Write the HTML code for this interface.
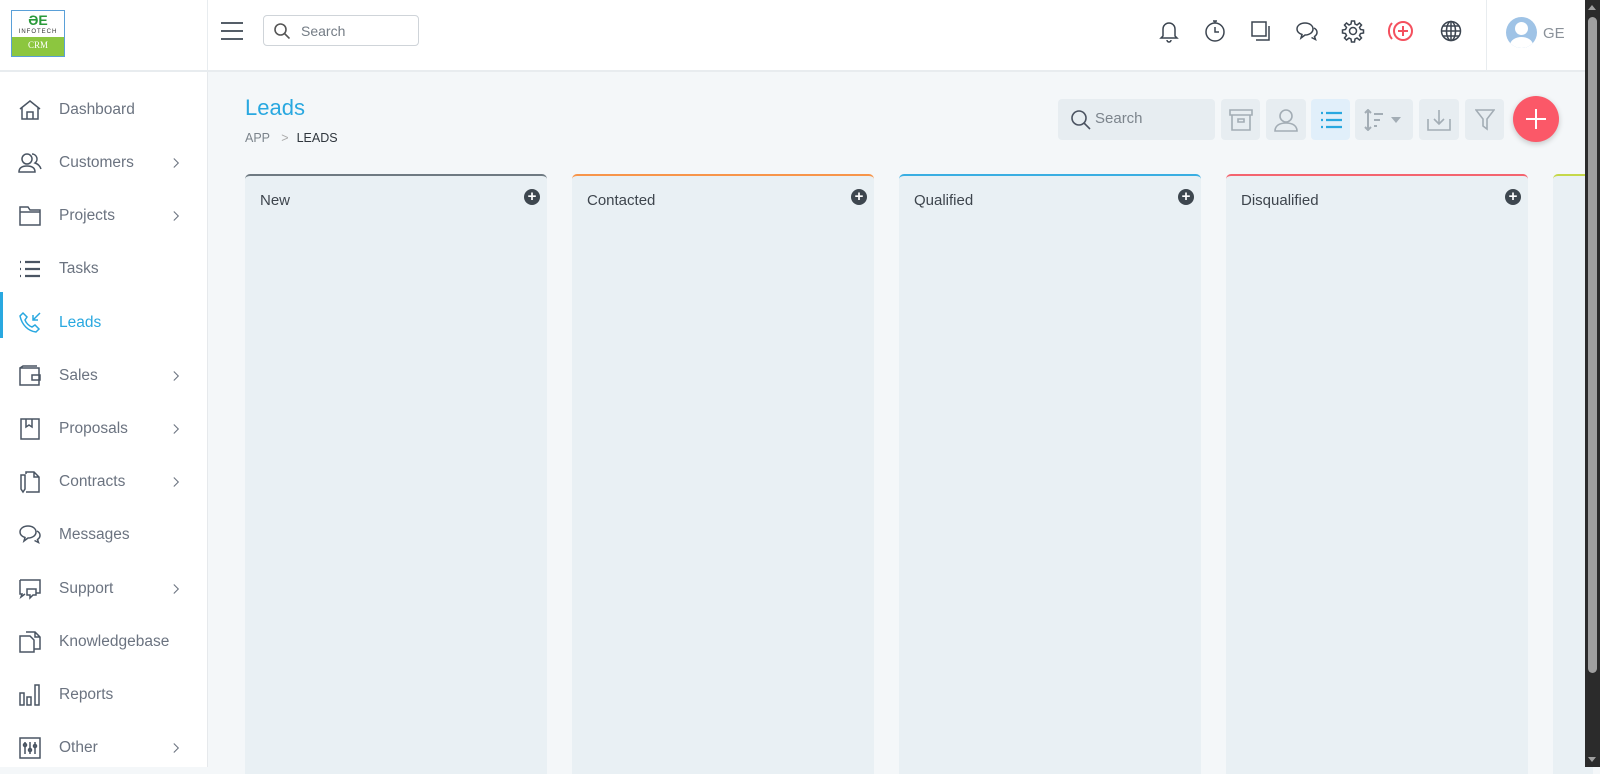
<!DOCTYPE html>
<html><head><meta charset="utf-8"><style>
*{box-sizing:border-box;margin:0;padding:0}
body{width:1600px;height:767px;overflow:hidden;background:#f4f7f9;font-family:"Liberation Sans",sans-serif;position:relative}
.hdr{position:absolute;left:0;top:0;width:1585px;height:72px;background:#fff;border-bottom:2px solid #e8ecef}
.side{position:absolute;left:0;top:72px;width:208px;height:695px;background:#fff;border-right:1px solid #e6e9ec}
.vdiv{position:absolute;left:207px;top:0;width:1px;height:72px;background:#e8ecef}
.item{position:absolute;left:0;width:207px;height:44px;display:flex;align-items:center}
.item svg{position:absolute;left:18px;width:24px;height:24px;fill:none;stroke:#4a5563;stroke-width:1.5}
.item span{position:absolute;left:59px;font-size:15.5px;color:#6b7380}
.item .chev{position:absolute;left:172px;width:9px;height:12px;stroke-width:1.2}
.col{position:absolute;top:174px;width:302px;height:600px;background:#e9f0f4;border-radius:5px 5px 0 0;border-top:2px solid}
.col b{position:absolute;left:15px;top:16px;font-weight:normal;font-size:15px;color:#3e454d}
.col i{position:absolute;right:7px;top:13px;width:16px;height:16px;border-radius:50%;background:#3e474f;color:#fff;font-style:normal;font-size:15px;line-height:15px;text-align:center;font-weight:bold}
.tb{position:absolute;top:99px;height:41px;background:#e7edf1;border-radius:4px}
.tb svg{position:absolute;left:50%;top:50%;transform:translate(-50%,-50%);fill:none;stroke:#a3adb5;stroke-width:1.6}
.hi svg{position:absolute;top:19px;width:24px;height:24px;fill:none;stroke:#3c4550;stroke-width:1.5}
</style></head><body>
<div class="hdr hi">
  <div style="position:absolute;left:11px;top:10px;width:54px;height:47px;border:1px solid #5aa0d8;background:#fff">
    <div style="text-align:center;font-size:14px;font-weight:bold;color:#2a9a3a;line-height:16px;margin-top:1px">ƏE</div>
    <div style="text-align:center;font-size:6px;letter-spacing:1px;color:#333;line-height:8px">INFOTECH</div>
    <div style="position:absolute;left:0;right:0;bottom:0;height:19px;background:#8cc63f;color:#fff;font-size:9px;text-align:center;line-height:16px;font-family:'Liberation Serif',serif">CRM</div>
  </div>
  <div class="vdiv"></div>
  <svg style="left:221px;top:21px;width:22px;height:20px;stroke:#555e68;stroke-width:2" viewBox="0 0 22 20"><path d="M0 2h22M0 10h22M0 18h22"/></svg>
  <div style="position:absolute;left:263px;top:15px;width:156px;height:31px;border:1px solid #cfd4d9;border-radius:4px"><svg style="position:absolute;left:10px;top:7px;width:16px;height:16px;fill:none;stroke:#555;stroke-width:1.6" viewBox="0 0 16 16"><circle cx="6.5" cy="6.5" r="5.5"/><path d="M10.5 10.5l5 5"/></svg><span style="position:absolute;left:37px;top:7px;font-size:14px;color:#747c85">Search</span></div>
  <svg style="left:1157px" viewBox="0 0 24 24"><path d="M6 17V10a6 6 0 0112 0v7l2 2H4zM10 21a2 2 0 004 0"/></svg>
  <svg style="left:1203px" viewBox="0 0 24 24"><circle cx="12" cy="13" r="9"/><path d="M10 2h4M12 2v2M12 8v5h4"/></svg>
  <svg style="left:1249px" viewBox="0 0 24 24"><path d="M3 3h14v14H3zM20 7v14H7"/></svg>
  <svg style="left:1295px" viewBox="0 0 24 24"><path d="M10 4c4.5 0 8 2.5 8 6s-3.5 6-8 6l-4 3 1-3.5C4 14.5 2 12.5 2 10c0-3.5 3.5-6 8-6zM19 9c2 1 3 2.5 3 4.5 0 1.5-1 3-2.5 4l1 3-4-2"/></svg>
  <svg style="left:1341px" viewBox="0 0 24 24"><circle cx="12" cy="12" r="3.5"/><path d="M10.5 2h3l.5 3 2 1 2.5-2 2 2-2 2.5 1 2 3 .5v3l-3 .5-1 2 2 2.5-2 2-2.5-2-2 1-.5 3h-3l-.5-3-2-1-2.5 2-2-2 2-2.5-1-2-3-.5v-3l3-.5 1-2-2-2.5 2-2 2.5 2 2-1z"/></svg>
  <svg style="left:1386px;width:30px;stroke:#f4505e;stroke-width:2" viewBox="0 0 30 24"><circle cx="17" cy="12" r="9"/><path d="M17 7v10M12 12h10M6 4a12 12 0 000 16"/></svg>
  <svg style="left:1439px" viewBox="0 0 24 24"><circle cx="12" cy="12" r="9.5"/><ellipse cx="12" cy="12" rx="4.5" ry="9.5"/><path d="M2.5 12h19M4 7h16M4 17h16M12 2.5v19"/></svg>
  <div style="position:absolute;left:1486px;top:0;width:1px;height:72px;background:#e8ecef"></div>
  <div style="position:absolute;left:1506px;top:17px;width:31px;height:31px;border-radius:50%;background:#9fc3e6;overflow:hidden"><div style="position:absolute;left:9px;top:5px;width:13px;height:13px;border-radius:50%;background:#fff"></div><div style="position:absolute;left:4px;top:20px;width:23px;height:16px;border-radius:50% 50% 0 0;background:#fff"></div></div>
  <span style="position:absolute;left:1543px;top:25px;font-size:15px;color:#8a9199">GE</span>
</div>
<div class="side">
  <div class="item" style="top:16px"><svg viewBox="0 0 24 24"><path d="M2 11L12 3l10 8M4 9v12h16V9M9 21v-7h6v7"/></svg><span>Dashboard</span></div>
  <div class="item" style="top:69px"><svg viewBox="0 0 24 24"><circle cx="9" cy="8" r="5"/><path d="M1 21c0-4 3-6 8-6s8 2 8 6zM14 3a5 5 0 013 9c3 1 5 3 6 6"/></svg><span>Customers</span><svg class="chev" viewBox="0 0 10 12"><path d="M2 1l5 5-5 5" stroke="#6b7380" fill="none"/></svg></div>
  <div class="item" style="top:122px"><svg viewBox="0 0 24 24"><path d="M2 3h8l2 3h10v15H2zM2 8h20"/></svg><span>Projects</span><svg class="chev" viewBox="0 0 10 12"><path d="M2 1l5 5-5 5" stroke="#6b7380" fill="none"/></svg></div>
  <div class="item" style="top:175px"><svg viewBox="0 0 24 24" style="stroke-width:2.2"><path d="M2 5h1M2 12h1M2 19h1M7 5h15M7 12h15M7 19h15"/></svg><span>Tasks</span></div>
  <div style="position:absolute;left:0;top:220px;width:3px;height:46px;background:#29a8e0"></div>
  <div class="item" style="top:229px"><svg viewBox="0 0 24 24" style="stroke:#29a8e0"><path d="M5 2l4 4-2 3c1 3 4 6 7 7l3-2 4 4-3 3C10 20 4 14 2 5zM22 2l-7 7M15 4v5h5"/></svg><span style="color:#29a8e0">Leads</span></div>
  <div class="item" style="top:282px"><svg viewBox="0 0 24 24"><path d="M2 4h19v17H2zM2 4l3-2h14M14 11h8v5h-8z"/></svg><span>Sales</span><svg class="chev" viewBox="0 0 10 12"><path d="M2 1l5 5-5 5" stroke="#6b7380" fill="none"/></svg></div>
  <div class="item" style="top:335px"><svg viewBox="0 0 24 24"><path d="M3 2h18v20H3zM8 2v8l3-2 3 2V2"/></svg><span>Proposals</span><svg class="chev" viewBox="0 0 10 12"><path d="M2 1l5 5-5 5" stroke="#6b7380" fill="none"/></svg></div>
  <div class="item" style="top:388px"><svg viewBox="0 0 24 24"><path d="M8 4V2h8l5 5v15H8M16 2v5h5M3 5h4v14l-2 3-2-3z"/></svg><span>Contracts</span><svg class="chev" viewBox="0 0 10 12"><path d="M2 1l5 5-5 5" stroke="#6b7380" fill="none"/></svg></div>
  <div class="item" style="top:441px"><svg viewBox="0 0 24 24"><path d="M10 3c4.5 0 8 2.5 8 6s-3.5 6-8 6l-4 3 1-3.5C4 13.5 2 11.5 2 9c0-3.5 3.5-6 8-6zM19 8c2 1 3 2.5 3 4.5 0 1.5-1 3-2.5 4l1 3-4-2"/></svg><span>Messages</span></div>
  <div class="item" style="top:495px"><svg viewBox="0 0 24 24"><path d="M2 3h20v13h-4M2 3v14h2l-1 3 4-3M9 12h9v6h-3l-3 3v-3H9z"/></svg><span>Support</span><svg class="chev" viewBox="0 0 10 12"><path d="M2 1l5 5-5 5" stroke="#6b7380" fill="none"/></svg></div>
  <div class="item" style="top:548px"><svg viewBox="0 0 24 24"><path d="M2 6h10l4 4v12H2zM8 2h9l5 5v12h-6M17 2v5h5"/></svg><span>Knowledgebase</span></div>
  <div class="item" style="top:601px"><svg viewBox="0 0 24 24"><path d="M2 10h4v12H2zM9 14h4v8H9zM17 2h4v20h-4z"/></svg><span>Reports</span></div>
  <div class="item" style="top:654px"><svg viewBox="0 0 24 24"><path d="M2 2h20v20H2zM7 6v12M12 6v12M17 6v12"/><circle cx="7" cy="9" r="1.5"/><circle cx="12" cy="14" r="1.5"/><circle cx="17" cy="10" r="1.5"/></svg><span>Other</span><svg class="chev" viewBox="0 0 10 12"><path d="M2 1l5 5-5 5" stroke="#6b7380" fill="none"/></svg></div>
</div>
<div style="position:absolute;left:245px;top:95px;font-size:22px;color:#29a8e0">Leads</div>
<div style="position:absolute;left:245px;top:131px;font-size:12.5px;color:#7c848c">APP <span style="margin:0 8px;color:#aaa">&gt;</span><span style="color:#2f363d">LEADS</span></div>

<div class="tb" style="left:1058px;width:157px"><svg style="left:12px;transform:translateY(-50%);width:22px;height:22px;stroke:#4a5260" viewBox="0 0 22 22"><circle cx="9" cy="9" r="7"/><path d="M14 14l6 6"/></svg><span style="position:absolute;left:37px;top:11px;font-size:15px;color:#7c848c">Search</span></div>
<div class="tb" style="left:1221px;width:39px"><svg width="24" height="22" viewBox="0 0 24 22"><path d="M1 1h22v5H1zM3 6v15h18V6M9 10h6v3H9z"/></svg></div>
<div class="tb" style="left:1266px;width:40px"><svg width="24" height="24" viewBox="0 0 24 24"><circle cx="12" cy="8" r="6"/><path d="M1 23c0-5 4-8 11-8s11 3 11 8z"/></svg></div>
<div class="tb" style="left:1311px;width:39px;background:#e1effa"><svg width="22" height="18" viewBox="0 0 22 18" style="stroke:#29a8e0;stroke-width:2.2"><path d="M1 2h2M1 9h2M1 16h2M6 2h16M6 9h16M6 16h16"/></svg></div>
<div class="tb" style="left:1355px;width:58px"><svg width="40" height="22" viewBox="0 0 40 22" style="stroke-width:2"><path d="M4 1v20M1 4l3-3 3 3M1 18l3 3 3-3M10 5h9M10 11h6M10 17h3"/><path d="M27 8h10l-5 6z" fill="#a3adb5" stroke="none"/></svg></div>
<div class="tb" style="left:1419px;width:40px"><svg width="24" height="22" viewBox="0 0 24 22"><path d="M1 10v11h22V10M12 1v14M7 10l5 5 5-5"/></svg></div>
<div class="tb" style="left:1465px;width:39px"><svg width="20" height="22" viewBox="0 0 20 22"><path d="M1 1h18l-7 9v10l-4-3v-7z"/></svg></div>
<div style="position:absolute;left:1513px;top:96px;width:46px;height:46px;border-radius:50%;background:#fb5868;box-shadow:0 2px 6px rgba(0,0,0,.2)"><svg style="position:absolute;left:12px;top:12px" width="22" height="22" viewBox="0 0 22 22"><path d="M11 1v20M1 11h20" stroke="#fff" stroke-width="2"/></svg></div>

<div class="col" style="left:245px;border-color:#6f7a82"><b>New</b><i>+</i></div>
<div class="col" style="left:572px;border-color:#f7954a"><b>Contacted</b><i>+</i></div>
<div class="col" style="left:899px;border-color:#3aaee2"><b>Qualified</b><i>+</i></div>
<div class="col" style="left:1226px;border-color:#f4646f"><b>Disqualified</b><i>+</i></div>
<div class="col" style="left:1553px;width:40px;border-color:#c5d84a"></div>

<div style="position:absolute;left:1585px;top:0;width:15px;height:767px;background:#2b2b2b">
  <div style="position:absolute;left:3px;top:17px;width:9px;height:656px;border-radius:5px;background:#9f9f9f"></div>
  <div style="position:absolute;left:3px;top:5px;border:4.5px solid transparent;border-bottom:5px solid #9f9f9f;border-top:0"></div>
  <div style="position:absolute;left:3px;bottom:5px;border:4.5px solid transparent;border-top:5px solid #9f9f9f;border-bottom:0"></div>
</div>
</body></html>
